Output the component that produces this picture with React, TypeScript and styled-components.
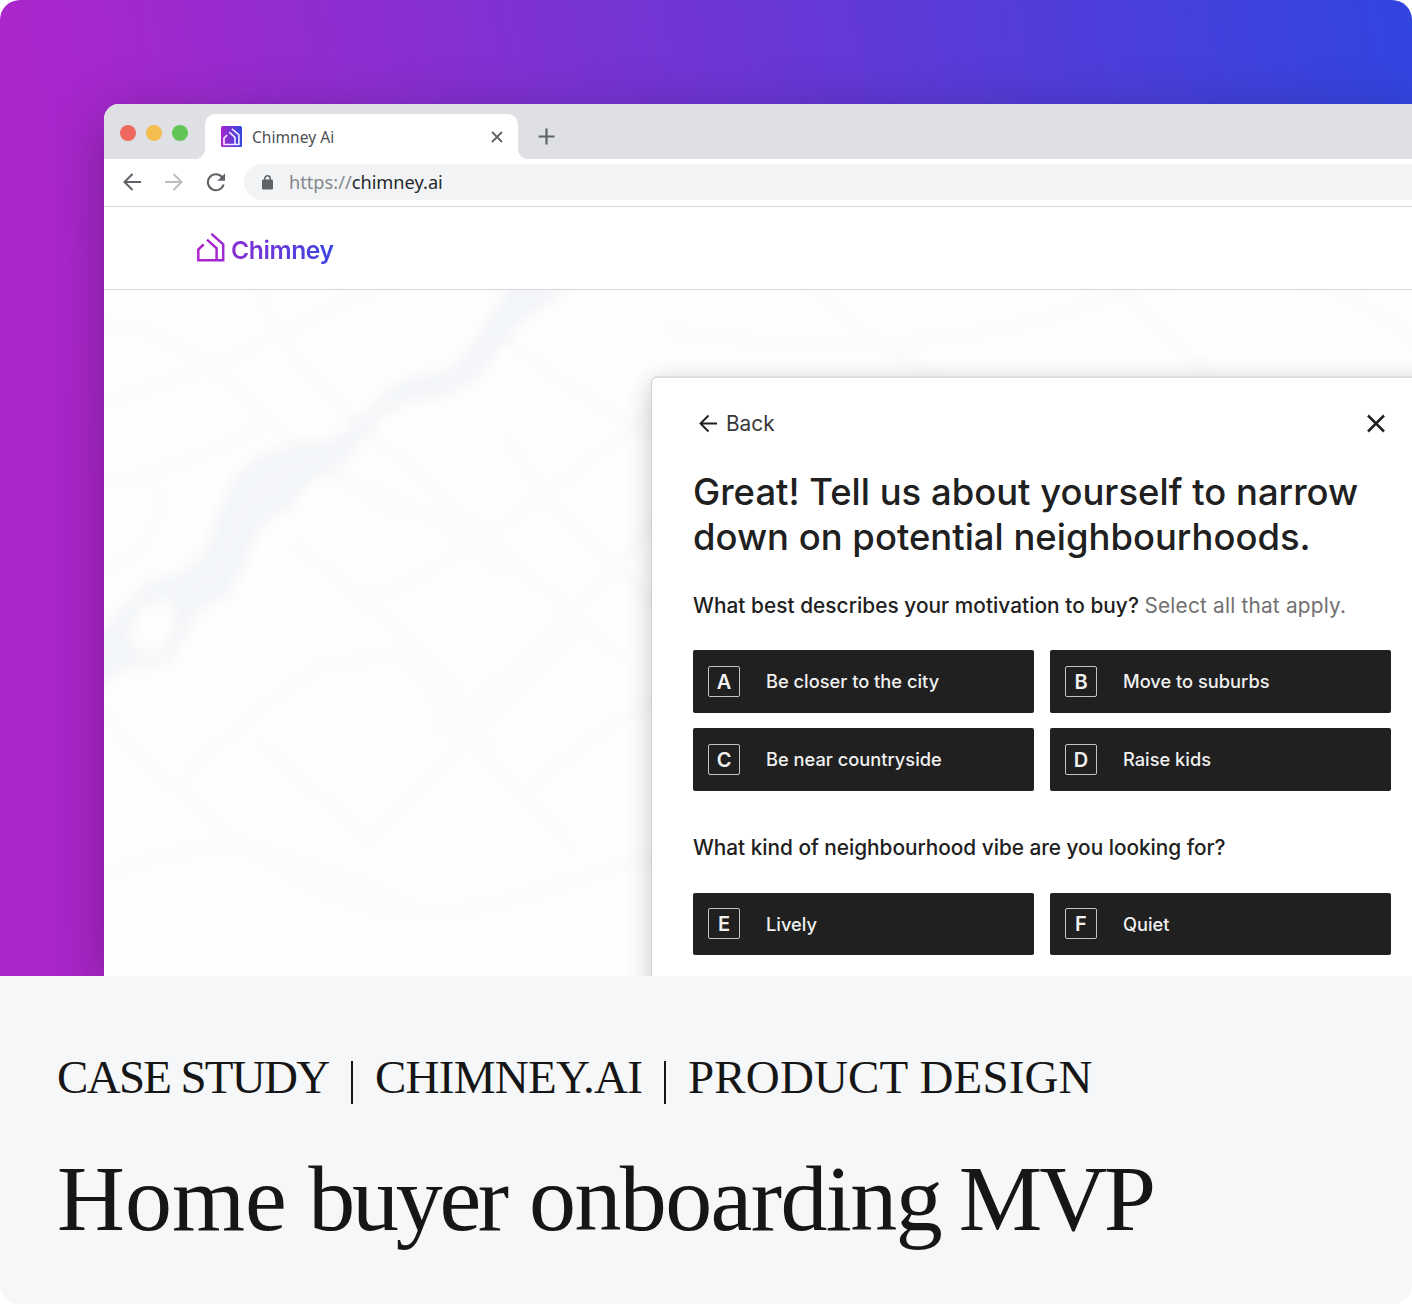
import React from "react";
import styled, { createGlobalStyle } from "styled-components";

const Global = createGlobalStyle`
  * { box-sizing: border-box; }
  body { margin: 0; background: #fff; }
  h1, h2, p { margin: 0; font-weight: 400; }
  button { border: 0; background: none; padding: 0; font: inherit; color: inherit; text-align: left; }
`;

const Card = styled.main`
  width: 1412px;
  height: 1304px;
  border-radius: 20px;
  overflow: hidden;
  display: flex;
  flex-direction: column;
  background: #f6f7f9;
`;

const Hero = styled.section`
  height: 976px;
  padding: 104px 0 0 104px;
  overflow: hidden;
  background: linear-gradient(80deg, #ab26cb 11%, #3145df 100%);
`;

const Browser = styled.div`
  height: 872px;
  display: flex;
  flex-direction: column;
  background: #fff;
  border-top-left-radius: 15px;
  overflow: hidden;
  box-shadow: 0 16px 60px rgba(0, 0, 0, 0.28);
`;

const TabBar = styled.div`
  flex: none;
  height: 54.5px;
  background: #dfe0e4;
  display: flex;
  align-items: flex-end;
  padding-left: 16px;
`;

const Lights = styled.div`
  display: flex;
  gap: 10px;
  width: 85px;
  height: 100%;
  padding-top: 21px;
`;

const Light = styled.span<{ $color: string }>`
  width: 16px;
  height: 16px;
  border-radius: 50%;
  background: ${(p) => p.$color};
`;

const Tab = styled.div`
  position: relative;
  width: 313px;
  height: 45px;
  padding: 0 14px 0 16px;
  display: flex;
  align-items: center;
  background: #fff;
  border-radius: 10px 10px 0 0;
  font: 400 15.6px "Noto Sans", "Open Sans", sans-serif;
  color: #4f5154;
  &::before, &::after {
    content: "";
    position: absolute;
    bottom: 0;
    width: 10px;
    height: 10px;
  }
  &::before { left: -10px; background: radial-gradient(circle at 0 0, transparent 9.6px, #fff 10.2px); }
  &::after { right: -10px; background: radial-gradient(circle at 100% 0, transparent 9.6px, #fff 10.2px); }
`;

const TabTitle = styled.span`
  flex: 1;
  margin-left: 10px;
  padding-top: 2px;
`;

const NewTab = styled.button`
  display: flex;
  margin: 0 0 14px 20px;
`;

const Toolbar = styled.div`
  flex: none;
  height: 48.5px;
  padding-left: 18px;
  display: flex;
  align-items: center;
  gap: 22px;
  border-bottom: 1.5px solid #d6d6da;
`;

const Address = styled.div`
  flex: 1;
  height: 36px;
  margin-left: -4px;
  padding-left: 15px;
  display: flex;
  align-items: center;
  background: #f1f3f4;
  border-radius: 18px 0 0 18px;
  font: 400 18.2px "Noto Sans", "Open Sans", sans-serif;
  color: #85878a;
  b { font-weight: 400; color: #26282c; }
  span { margin-left: 13px; padding-bottom: 0; }
`;

const SiteHeader = styled.header`
  flex: none;
  height: 83px;
  padding: 2px 0 0 93px;
  display: flex;
  align-items: center;
  gap: 5px;
  border-bottom: 1.5px solid #d6d6da;
`;

const Wordmark = styled.span`
  padding-top: 1px;
  font: 600 24.6px/32px Inter, sans-serif;
  letter-spacing: -0.4px;
  background: linear-gradient(90deg, #8a30d2, #3a46e4);
  background-clip: text;
  -webkit-background-clip: text;
  color: transparent;
`;

const MapArea = styled.div`
  flex: 1;
  position: relative;
  padding: 86px 0 0 547px;
  overflow: hidden;
`;

const MapSvg = styled.svg`
  position: absolute;
  inset: 0;
`;

const Modal = styled.section`
  position: relative;
  width: 900px;
  height: 760px;
  padding: 31px 0 0 41px;
  background: #fff;
  border: 1px solid #d0d0d4;
  border-top: 2px solid #dcdce1;
  border-radius: 6px;
  box-shadow: 0 6px 26px rgba(0, 0, 0, 0.22);
  font-family: Inter, sans-serif;
  color: #202020;
`;

const ModalBar = styled.div`
  width: 693px;
  height: 28px;
  display: flex;
  align-items: center;
  justify-content: space-between;
  padding-left: 4px;
`;

const Back = styled.button`
  display: flex;
  align-items: center;
  gap: 7px;
  font-size: 20.8px;
  color: #383838;
`;

const Title = styled.h2`
  margin-top: 33px;
  font-size: 36.4px;
  line-height: 45px;
  font-weight: 500;
  letter-spacing: 0.02px;
  white-space: nowrap;
`;

const Question = styled.p<{ $top: number; $gap: number; $track: number }>`
  margin: ${(p) => p.$top}px 0 ${(p) => p.$gap}px;
  font-size: 20.8px;
  line-height: 26px;
  font-weight: 500;
  letter-spacing: ${(p) => p.$track}px;
  white-space: nowrap;
`;

const Hint = styled.span`
  font-weight: 400;
  color: #707070;
  letter-spacing: 0.2px;
`;

const Options = styled.div`
  display: grid;
  grid-template-columns: 341px 341px;
  grid-auto-rows: 62.5px;
  gap: 15.5px 16px;
`;

const Option = styled.button`
  display: flex;
  align-items: center;
  gap: 26px;
  padding: 0 0 0 15px;
  background: #202020;
  border-radius: 2px;
  color: #f0f0f0;
  font-size: 18.25px;
  font-weight: 500;
`;

const Key = styled.span`
  width: 32px;
  height: 31px;
  border: 1.4px solid #c4c4c8;
  border-radius: 2px;
  display: flex;
  align-items: center;
  justify-content: center;
  padding-top: 1px;
  font-size: 20px;
  font-weight: 600;
`;

const Caption = styled.section`
  flex: 1;
  padding: 74px 0 0 57px;
  font-family: "Liberation Serif", serif;
  color: #161616;
  white-space: nowrap;
`;

const Eyebrow = styled.p`
  display: flex;
  align-items: center;
  font-size: 47px;
  line-height: 54px;
`;

const Segment = styled.span<{ $track: number; $width: number }>`
  width: ${(p) => p.$width}px;
  letter-spacing: ${(p) => p.$track}px;
`;

const Divider = styled.i`
  width: 2px;
  height: 43px;
  margin: 11px 22px 0 23px;
  background: #161616;
`;

const Headline = styled.h1`
  margin-top: 40px;
  font-size: 94px;
  line-height: 108px;
  letter-spacing: -1.9px;
`;

const Word = styled.span<{ $track: number; $after?: number }>`
  letter-spacing: ${(p) => p.$track}px;
  margin-right: ${(p) => p.$after ?? 0}px;
`;

const HouseLines = ({ color, width = 2.5 }: { color: string; width?: number }) => (
  <g fill="none" stroke={color} strokeWidth={width}>
    <path d="M6.7 11.3 L1.3 16.5 V27.2 H26.2 V11.2 L14.4 0.9" />
    <path d="M10 6.6 L19.6 15.2 V27" />
  </g>
);

const streets = [
  "M-20 25 C40 30 80 40 130 80 C180 115 220 150 300 185",
  "M0 90 Q90 70 150 45 T300 -10",
  "M0 158 Q80 145 160 110",
  "M150 -10 C180 60 230 90 300 140 L520 300",
  "M40 150 C70 170 60 200 0 230",
  "M0 340 C20 370 50 390 80 410 C130 450 220 500 300 505 C400 510 470 470 560 460",
  "M0 475 Q60 455 130 450 Q230 470 310 500",
  "M80 395 L140 350 L215 305 L300 295 L350 355 L420 410 L470 455",
  "M150 365 L265 445 L380 350 L480 270",
  "M190 205 L280 265 L340 310 L390 380",
  "M230 150 Q340 180 400 230",
  "M250 255 Q330 230 400 190 T560 90",
  "M380 20 Q450 80 560 120",
  "M400 120 Q470 200 560 260",
  "M330 360 Q430 300 560 180",
  "M420 410 Q500 350 560 330",
];

const MapBackdrop = () => (
  <MapSvg width="1308" height="686" viewBox="0 0 1308 686">
    <defs>
      <filter id="soft" x="-10%" y="-10%" width="120%" height="120%"><feGaussianBlur stdDeviation="6.5" /></filter>
      <filter id="softer" x="-10%" y="-10%" width="120%" height="120%"><feGaussianBlur stdDeviation="4" /></filter>
    </defs>
    <rect width="1308" height="686" fill="#fefefe" />
    <g filter="url(#softer)" fill="none" stroke="#fbfbfb" strokeWidth="11" transform="scale(1 1.232)">
      {streets.map((d) => <path key={d} d={d} />)}
      <path d="M560 32 Q800 65 1000 8 T1320 50" />
      <path d="M700 -10 Q760 48 860 80 M1000 -10 L1120 80" />
    </g>
    <g filter="url(#soft)" transform="scale(1 1.232)">
      <path
        fill="#f3f5f8"
        fillRule="evenodd"
        d="M-20 285 L0 275 L25 250 Q42 234 62 232 Q88 228 104 208 Q114 172 134 148 Q158 129 185 126 L225 122 Q244 113 257 102 Q282 80 306 70 L345 65 Q366 48 384 25 L412 -15 L475 -15 L450 8 L415 28 Q396 45 380 67 Q356 84 333 88 L305 91 Q280 100 262 117 Q244 142 217 150 Q197 162 187 177 Q165 184 150 202 Q144 225 124 247 L90 264 Q82 288 62 303 Q38 307 18 308 L0 320 L-20 332 Z M25 281 Q36 304 63 288 Q77 263 64 251 Q36 250 25 281 Z"
      />
    </g>
  </MapSvg>
);

const motivation = [["A", "Be closer to the city"], ["B", "Move to suburbs"], ["C", "Be near countryside"], ["D", "Raise kids"]];
const vibe = [["E", "Lively"], ["F", "Quiet"]];

const OptionGrid = ({ items }: { items: string[][] }) => (
  <Options>
    {items.map(([key, label]) => (
      <Option key={key}><Key>{key}</Key>{label}</Option>
    ))}
  </Options>
);

export default function App() {
  return (
    <Card>
      <Global />
      <Hero>
        <Browser>
          <TabBar>
            <Lights>
              <Light $color="#ee6a5f" />
              <Light $color="#f5bd4f" />
              <Light $color="#61c454" />
            </Lights>
            <Tab>
              <svg width="21" height="21" viewBox="0 0 21 21">
                <defs><linearGradient id="fav"><stop stopColor="#a826cc" /><stop offset="1" stopColor="#3048e2" /></linearGradient></defs>
                <rect width="21" height="21" rx="1.5" fill="url(#fav)" />
                <g transform="translate(2.2 2.2) scale(.6)"><HouseLines color="#f4eaff" width={2.7} /></g>
              </svg>
              <TabTitle>Chimney Ai</TabTitle>
              <svg width="14" height="15" viewBox="0 0 14 15"><path d="M2 3 L12 13 M12 3 L2 13" stroke="#5f6368" strokeWidth="1.8" /></svg>
            </Tab>
            <NewTab aria-label="New tab">
              <svg width="17" height="17" viewBox="0 0 17 17"><path d="M8.5 .5 V16.5 M.5 8.5 H16.5" stroke="#5f6368" strokeWidth="2.2" /></svg>
            </NewTab>
          </TabBar>
          <Toolbar>
            <svg width="20" height="18" viewBox="0 0 20 18" fill="none" stroke="#5f6368" strokeWidth="2"><path d="M19 9 H3 M10.5 1 L2.5 9 L10.5 17" /></svg>
            <svg width="20" height="18" viewBox="0 0 20 18" fill="none" stroke="#bcbec1" strokeWidth="2"><path d="M1 9 H17 M9.5 1 L17.5 9 L9.5 17" /></svg>
            <svg width="20" height="20" viewBox="0 0 20 20"><path d="M16.3 5.4 A8 8 0 1 0 17.6 12.5" fill="none" stroke="#5f6368" strokeWidth="2.1" /><path d="M19 1.2 V8.8 H11.4 Z" fill="#5f6368" /></svg>
            <Address>
              <svg width="17" height="18" viewBox="0 0 17 18"><rect x="3" y="6.6" width="11" height="9.8" rx="1.2" fill="#5f6368" /><path d="M5.8 8 V5.4 a2.7 2.7 0 0 1 5.4 0 V8" fill="none" stroke="#5f6368" strokeWidth="1.5" /></svg>
              <span>https://<b>chimney.ai</b></span>
            </Address>
          </Toolbar>
          <SiteHeader>
            <svg width="29" height="32" viewBox="0 0 29 32">
              <defs><linearGradient id="mark" gradientUnits="userSpaceOnUse" x1="0" y1="0" x2="29" y2="0"><stop stopColor="#b024cc" /><stop offset="1" stopColor="#9a2bd0" /></linearGradient></defs>
              <HouseLines color="url(#mark)" />
            </svg>
            <Wordmark>Chimney</Wordmark>
          </SiteHeader>
          <MapArea>
            <MapBackdrop />
            <Modal>
              <ModalBar>
                <Back>
                  <svg width="22" height="20" viewBox="0 0 22 20" fill="none" stroke="#202020" strokeWidth="1.9"><path d="M20 10.5 H4 M11.5 2.5 L3.5 10.5 L11.5 18.5" /></svg>
                  Back
                </Back>
                <svg width="20" height="20" viewBox="0 0 20 20"><path d="M2 2.5 L18 18.5 M18 2.5 L2 18.5" stroke="#202020" strokeWidth="2.5" /></svg>
              </ModalBar>
              <Title>Great! Tell us about yourself to narrow<br />down on potential neighbourhoods.</Title>
              <Question $top={33} $gap={31} $track={0.05}>
                What best describes your motivation to buy? <Hint>Select all that apply.</Hint>
              </Question>
              <OptionGrid items={motivation} />
              <Question $top={44} $gap={32} $track={-0.02}>What kind of neighbourhood vibe are you looking for?</Question>
              <OptionGrid items={vibe} />
            </Modal>
          </MapArea>
        </Browser>
      </Hero>
      <Caption>
        <Eyebrow>
          <Segment $track={-1.7} $width={271}>CASE STUDY</Segment>
          <Divider />
          <Segment $track={-0.75} $width={266}>CHIMNEY.AI</Segment>
          <Divider />
          <Segment $track={0.15} $width={404}>PRODUCT DESIGN</Segment>
        </Eyebrow>
        <Headline>
          <Word $track={0}>Home</Word> <Word $track={-3.3} $after={1.5}>buyer</Word>{" "}
          <Word $track={-1.6} $after={-4}>onboarding</Word> <Word $track={-3.2}>MVP</Word>
        </Headline>
      </Caption>
    </Card>
  );
}
